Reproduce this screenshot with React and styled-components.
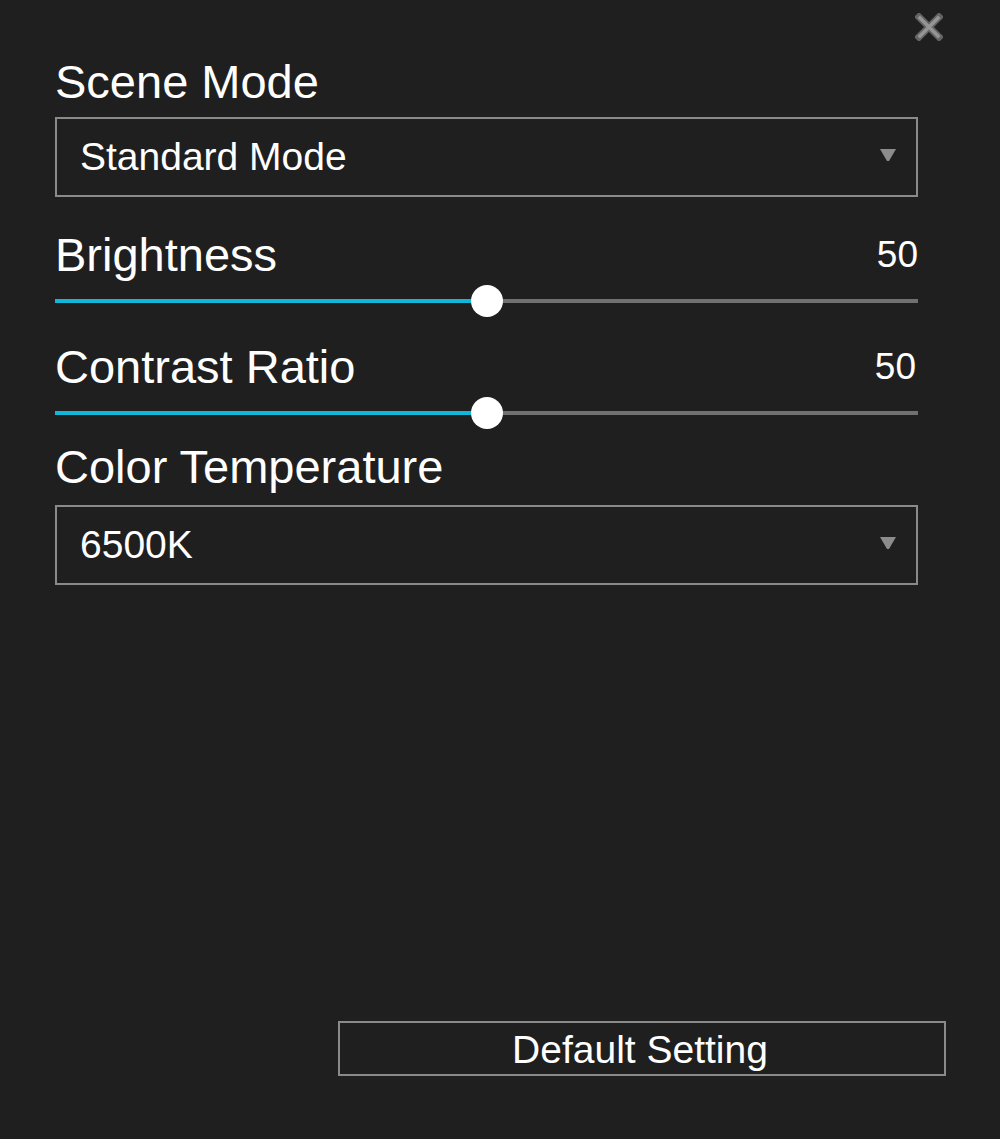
import styled, { createGlobalStyle } from "styled-components";

const GlobalStyle = createGlobalStyle`
  html, body {
    margin: 0;
    padding: 0;
    background: #1f1f1f;
  }
  body {
    font-family: "Liberation Sans", Arial, sans-serif;
    color: #ffffff;
  }
`;

const sliders = [
  { label: "Brightness", value: 50, nudge: 0 },
  { label: "Contrast Ratio", value: 50, nudge: 2 },
];

const Dropdown = ({ value }) => (
  <SelectBox>
    <span>{value}</span>
    <svg width="18" height="14" viewBox="0 0 18 14">
      <path d="M1 1 H17 L10 13 H8 Z" fill="#8c8c8c" />
    </svg>
  </SelectBox>
);

const Slider = ({ label, value, nudge }) => (
  <SliderBlock>
    <LabelRow>
      <Label>{label}</Label>
      <Value $nudge={nudge}>{value}</Value>
    </LabelRow>
    <TrackArea>
      <Track>
        <Fill style={{ width: `${value}%` }} />
        <Thumb style={{ left: `${value}%` }} />
      </Track>
    </TrackArea>
  </SliderBlock>
);

export default function App() {
  return (
    <>
      <GlobalStyle />
      <Panel>
        <CloseButton aria-label="close">
          <svg width="28" height="28" viewBox="0 0 28 28">
            <path
              d="M4 4 L24 24 M24 4 L4 24"
              stroke="#646464"
              strokeWidth="7"
              strokeLinecap="square"
            />
            <path
              d="M5 5 L23 23 M23 5 L5 23"
              stroke="#959595"
              strokeWidth="3.5"
              strokeLinecap="square"
            />
          </svg>
        </CloseButton>

        <Fields>
          <Label>Scene Mode</Label>
          <Spacer $h={12} />
          <Dropdown value="Standard Mode" />
          <Spacer $h={34} />
          <Slider {...sliders[0]} />
          <Spacer $h={25} />
          <Slider {...sliders[1]} />
          <Spacer $h={13} />
          <Label>Color Temperature</Label>
          <Spacer $h={15} />
          <Dropdown value="6500K" />
        </Fields>

        <Footer>
          <DefaultButton>Default Setting</DefaultButton>
        </Footer>
      </Panel>
    </>
  );
}

const Panel = styled.div`
  position: relative;
  box-sizing: border-box;
  min-height: 1139px;
  display: flex;
  flex-direction: column;
  padding: 58px 54px 63px 55px;
`;

const CloseButton = styled.div`
  position: absolute;
  top: 13px;
  left: 915px;
  width: 28px;
  height: 28px;
  svg {
    display: block;
  }
`;

const Fields = styled.div`
  width: 863px;
  display: flex;
  flex-direction: column;
`;

const Spacer = styled.div`
  height: ${(p) => p.$h}px;
  flex-shrink: 0;
`;

const Label = styled.div`
  font-size: 47px;
  line-height: 1;
  color: #ffffff;
  white-space: nowrap;
`;

const SelectBox = styled.div`
  box-sizing: border-box;
  height: 80px;
  border: 2px solid #8a8a8a;
  display: flex;
  align-items: center;
  justify-content: space-between;
  padding: 0 19px 0 23px;
  font-size: 39px;
  color: #ffffff;
  svg {
    display: block;
    margin-bottom: 4px;
  }
`;

const SliderBlock = styled.div`
  display: flex;
  flex-direction: column;
`;

const LabelRow = styled.div`
  display: flex;
  justify-content: space-between;
  align-items: flex-end;
`;

const Value = styled.div`
  font-size: 37px;
  line-height: 1;
  margin-bottom: 5px;
  margin-right: ${(p) => p.$nudge}px;
`;

const TrackArea = styled.div`
  height: 34px;
  margin-top: 6px;
  display: flex;
  align-items: center;
`;

const Track = styled.div`
  position: relative;
  width: 100%;
  height: 4px;
  background: #707070;
`;

const Fill = styled.div`
  height: 100%;
  background: #10b7d8;
`;

const Thumb = styled.div`
  position: absolute;
  top: 50%;
  width: 32px;
  height: 32px;
  border-radius: 50%;
  background: #ffffff;
  transform: translate(-50%, -50%);
`;

const Footer = styled.div`
  margin-top: auto;
  display: flex;
  justify-content: flex-end;
`;

const DefaultButton = styled.div`
  box-sizing: border-box;
  width: 608px;
  height: 55px;
  border: 2px solid #8a8a8a;
  display: flex;
  align-items: center;
  justify-content: center;
  font-size: 39px;
  color: #ffffff;
  padding: 2px 4px 0 0;
`;
